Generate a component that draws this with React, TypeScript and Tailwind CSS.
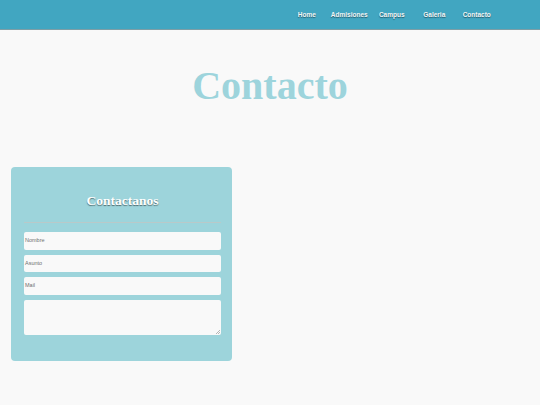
import type { ReactNode } from 'react'

const navItems = ['Home', 'Admisiones', 'Campus', 'Galeria', 'Contacto']

function Field({ children }: { children: ReactNode }) {
  return <div className="h-[17.5px] w-full rounded-[2px] bg-[#f9f9f9]">{children}</div>
}

export default function App() {
  return (
    <div className="min-h-[405px] w-[540px] bg-[#f9f9f9] font-['Liberation_Sans',Arial,sans-serif]">
      <header className="flex h-[30px] items-center justify-end border-b border-[#7d9ea6] bg-[#41a6c1] pr-[42px]">
        <nav className="flex items-center">
          {navItems.map((label) => (
            <a
              key={label}
              className="flex w-[42.5px] justify-center text-[6.5px] font-bold text-[#f2f6f7] [text-shadow:0_1px_1px_rgba(0,0,0,0.45)]"
            >
              {label}
            </a>
          ))}
        </nav>
      </header>

      <h1 className="mt-[32px] text-center font-['Liberation_Serif','Times_New_Roman',serif] text-[40px] leading-[48px] font-bold text-[#9dd4dc]">
        Contacto
      </h1>

      <section className="ml-[11px] mt-[57px] w-[221px] rounded-[4px] bg-[#9dd4db] pb-[26px] pl-[13px] pr-[11px] pt-[25px]">
        <h2 className="text-center font-['Liberation_Serif','Times_New_Roman',serif] text-[13.5px] leading-[18px] font-bold text-white [text-shadow:0_1px_1px_rgba(0,0,0,0.5)]">
          Contactanos
        </h2>
        <div className="mt-[12px] h-px w-full bg-[#b9c9c9]" />
        <form className="mt-[9px] flex flex-col gap-[5px]">
          <Field>
            <span className="block pl-[1px] pt-[5px] text-[5.5px] leading-[7px] text-[#707070]">Nombre</span>
          </Field>
          <Field>
            <span className="block pl-[1px] pt-[5px] text-[5.5px] leading-[7px] text-[#707070]">Asunto</span>
          </Field>
          <Field>
            <span className="block pl-[1px] pt-[5px] text-[5.5px] leading-[7px] text-[#707070]">Mail</span>
          </Field>
          <div className="relative h-[35px] w-full rounded-[2px] bg-[#f9f9f9]">
            <svg className="absolute bottom-[1px] right-[1px]" width="4" height="4" viewBox="0 0 4 4">
              <path d="M4 0 L0 4 M4 2 L2 4" stroke="#888" strokeWidth="0.6" />
            </svg>
          </div>
        </form>
      </section>
    </div>
  )
}
